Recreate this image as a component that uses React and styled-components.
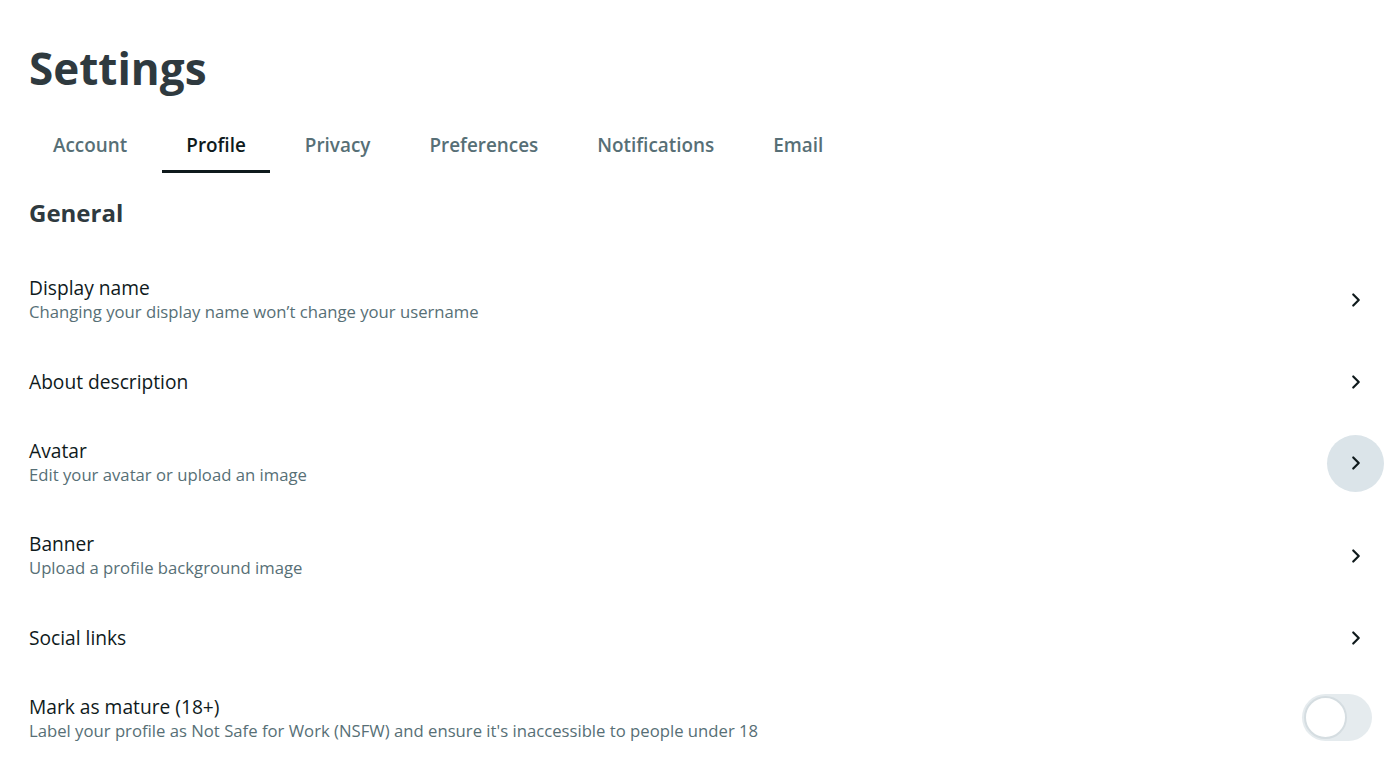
import React from 'react'
import styled, { createGlobalStyle } from 'styled-components'
import { ChevronRight } from 'lucide-react'

const GlobalStyle = createGlobalStyle`
  body {
    margin: 0;
    background: #fff;
    font-family: "Open Sans", "Noto Sans", sans-serif;
    color: #0f1a1c;
  }
`

const Page = styled.div`
  padding: 36px 15px 0 29px;
  display: flex;
  flex-direction: column;
`

const Title = styled.h1`
  margin: 0;
  font-size: 44px;
  font-weight: 700;
  line-height: 64px;
  color: #2f3a3f;
`

const Tabs = styled.nav`
  display: flex;
  gap: 11px;
  margin-top: 19px;
`

const Tab = styled.div`
  padding: 0 24px;
  height: 54px;
  display: flex;
  align-items: center;
  font-size: 18.9px;
  font-weight: 600;
  color: ${p => (p.$active ? '#0f1a1c' : '#576f76')};
  border-bottom: 3px solid ${p => (p.$active ? '#0f1a1c' : 'transparent')};
  box-sizing: border-box;
`

const Section = styled.h2`
  margin: 24px 0 0;
  font-size: 24px;
  font-weight: 700;
  line-height: 32px;
  color: #2f3a3f;
`

const List = styled.div`
  display: flex;
  flex-direction: column;
  margin-top: 24.5px;
`

const Row = styled.div`
  display: flex;
  align-items: center;
  justify-content: space-between;
  padding: 22.5px 0;
`

const Text = styled.div`
  display: flex;
  flex-direction: column;
`

const Label = styled.span`
  font-size: 19.2px;
  line-height: 24px;
  color: #0f1a1c;
`

const Hint = styled.span`
  font-size: 16.7px;
  line-height: 24px;
  color: #576f76;
`

const ArrowButton = styled.div`
  width: 57px;
  height: 57px;
  margin: -16px 0;
  border-radius: 50%;
  display: flex;
  align-items: center;
  justify-content: center;
  background: ${p => (p.$hover ? '#dbe4e9' : 'transparent')};
  color: #0f1a1c;
`

const Toggle = styled.div`
  width: 70px;
  height: 47px;
  margin: -12px 12px -12px 0;
  border-radius: 24px;
  background: #e5ebee;
  position: relative;
  flex-shrink: 0;
  transform: translateY(-2px);
`

const Knob = styled.div`
  position: absolute;
  left: 2px;
  top: 2px;
  width: 39px;
  height: 39px;
  border-radius: 50%;
  background: #fff;
  border: 2px solid #d5dde1;
`

const rows = [
  { label: 'Display name', hint: 'Changing your display name won’t change your username' },
  { label: 'About description' },
  { label: 'Avatar', hint: 'Edit your avatar or upload an image', hover: true },
  { label: 'Banner', hint: 'Upload a profile background image' },
  { label: 'Social links' },
]

const tabs = ['Account', 'Profile', 'Privacy', 'Preferences', 'Notifications', 'Email']

export default function App() {
  return (
    <>
      <GlobalStyle />
      <Page>
        <Title>Settings</Title>
        <Tabs>
          {tabs.map(t => (
            <Tab key={t} $active={t === 'Profile'}>{t}</Tab>
          ))}
        </Tabs>
        <Section>General</Section>
        <List>
          {rows.map(r => (
            <Row key={r.label}>
              <Text>
                <Label>{r.label}</Label>
                {r.hint && <Hint>{r.hint}</Hint>}
              </Text>
              <ArrowButton $hover={r.hover}>
                <ChevronRight size={22} strokeWidth={2.4} />
              </ArrowButton>
            </Row>
          ))}
          <Row>
            <Text>
              <Label>Mark as mature (18+)</Label>
              <Hint>Label your profile as Not Safe for Work (NSFW) and ensure it's inaccessible to people under 18</Hint>
            </Text>
            <Toggle>
              <Knob />
            </Toggle>
          </Row>
        </List>
      </Page>
    </>
  )
}
